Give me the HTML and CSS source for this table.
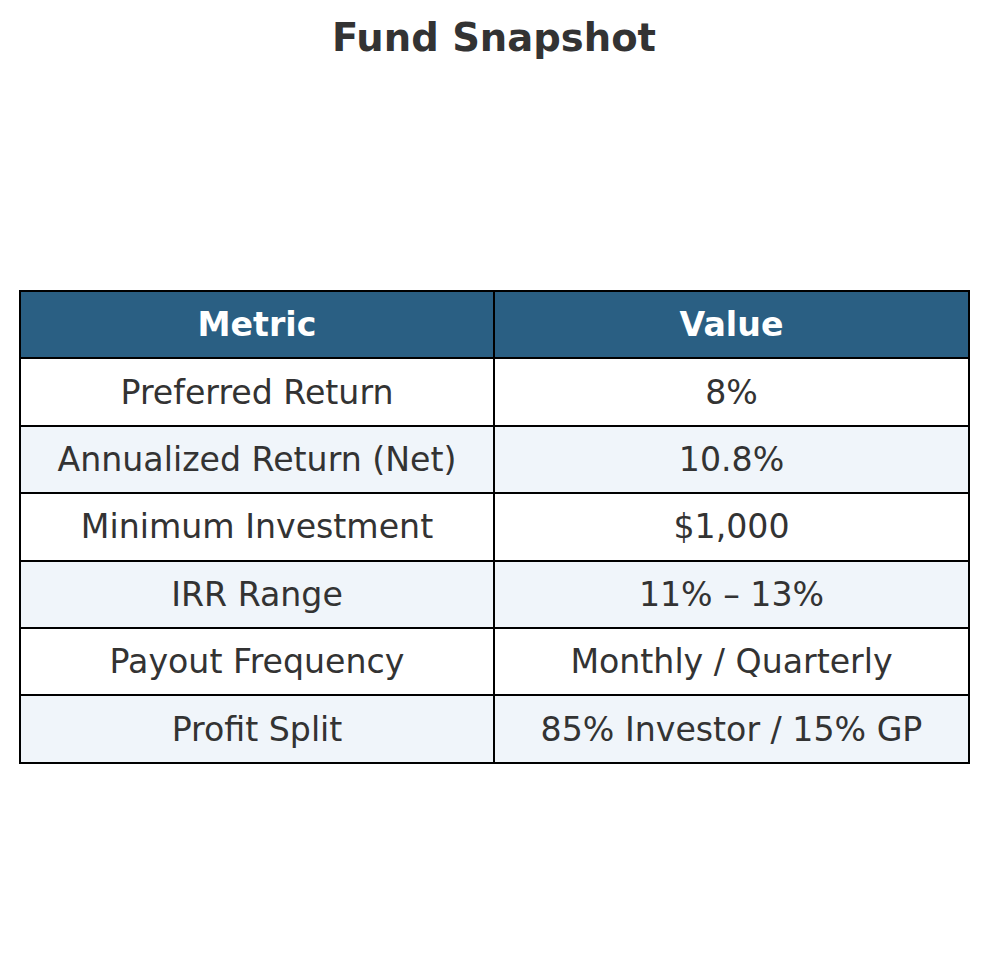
FILE: index.html
```html
<!DOCTYPE html>
<html>
<head>
<meta charset="utf-8">
<link rel="stylesheet" href="styles.css">
</head>
<body>
<div class="page">
  <h1 class="title">Fund Snapshot</h1>
  <table class="snap">
    <colgroup><col class="c1"><col class="c2"></colgroup>
    <thead>
      <tr><th>Metric</th><th>Value</th></tr>
    </thead>
    <tbody>
      <tr><td>Preferred Return</td><td>8%</td></tr>
      <tr class="alt"><td>Annualized Return (Net)</td><td>10.8%</td></tr>
      <tr><td>Minimum Investment</td><td>$1,000</td></tr>
      <tr class="alt"><td>IRR Range</td><td>11% – 13%</td></tr>
      <tr><td>Payout Frequency</td><td>Monthly / Quarterly</td></tr>
      <tr class="alt"><td>Profit Split</td><td>85% Investor / 15% GP</td></tr>
    </tbody>
  </table>
</div>
</body>
</html>
```
FILE: styles.css
```css
html, body {
  margin: 0;
  padding: 0;
  background: #ffffff;
}
.page {
  width: 988px;
  height: 980px;
  font-family: "DejaVu Sans", sans-serif;
  color: #333333;
}
.title {
  margin: 0;
  padding-top: 14px;
  height: 290px;
  box-sizing: border-box;
  text-align: center;
  font-size: 38.5px;
  line-height: 48px;
  font-weight: bold;
  color: #333333;
}
.snap {
  margin-left: 19px;
  width: 949px;
  border-collapse: collapse;
  table-layout: fixed;
}
.snap .c1 {
  width: 474px;
}
.snap .c2 {
  width: 475px;
}
.snap th, .snap td {
  border: 2px solid #000000;
  height: 67.4px;
  padding: 0;
  text-align: center;
  vertical-align: middle;
  font-size: 33.2px;
  box-sizing: border-box;
}
.snap th {
  background: #2a5f83;
  color: #ffffff;
  font-weight: bold;
}
.snap td {
  background: #ffffff;
}
.snap tr.alt td {
  background: #f0f5fa;
}
```
